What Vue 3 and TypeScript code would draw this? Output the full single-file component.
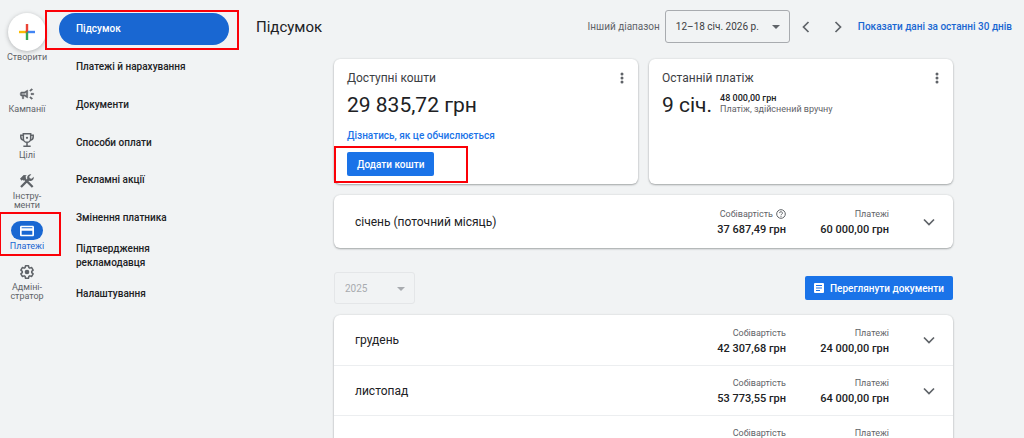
<script setup lang="ts">
import { ref } from 'vue'

interface RailItem {
  icon: 'campaign' | 'goals' | 'tools' | 'billing' | 'admin'
  lines: string[]
  active?: boolean
}

interface MonthRow {
  id: string
  name?: string
  cost?: string
  paid?: string
}

const rail: RailItem[] = [
  { icon: 'campaign', lines: ['Кампанії'] },
  { icon: 'goals', lines: ['Цілі'] },
  { icon: 'tools', lines: ['Інстру-', 'менти'] },
  { icon: 'billing', lines: ['Платежі'], active: true },
  { icon: 'admin', lines: ['Адміні-', 'стратор'] },
]

const sections: string[] = [
  'Підсумок',
  'Платежі й нарахування',
  'Документи',
  'Способи оплати',
  'Рекламні акції',
  'Змінення платника',
  'Підтвердження рекламодавця',
  'Налаштування',
]

const months: MonthRow[] = [
  { id: '2025-12', name: 'грудень', cost: '42 307,68 грн', paid: '24 000,00 грн' },
  { id: '2025-11', name: 'листопад', cost: '53 773,55 грн', paid: '64 000,00 грн' },
  { id: '2025-10' },
]

const activeSection = ref(0)
</script>

<template>
  <div class="app">
    <nav class="rail" aria-label="Головне меню">
      <button class="create" type="button">
        <span class="create-circle">
          <svg viewBox="0 0 18 18" width="18" height="18" aria-hidden="true">
            <path d="M7.800 1h2.400v7H7.800z" fill="#ea4335" />
            <path d="M1 7.800h7v2.400H1z" fill="#fbbc04" />
            <path d="M10 7.800h7v2.400h-7z" fill="#4285f4" />
            <path d="M7.800 8h2.400v9H7.800z" fill="#34a853" />
            <path d="M7.800 7.800h2.400l-2.400 2.400z" fill="#ea4335" />
          </svg>
        </span>
        <span>Створити</span>
      </button>
      <a
        v-for="item in rail"
        :key="item.icon"
        href="#"
        class="rail-item"
        :class="[item.icon, { active: item.active }]"
      >
        <span class="rail-icon">
          <svg viewBox="0 0 24 24" width="16" height="16" fill="currentColor" aria-hidden="true">
            <path v-if="item.icon === 'campaign'" stroke="currentColor" stroke-width=".8" d="M18 11v2h4v-2h-4zm-2 6.61c.96.71 2.21 1.65 3.2 2.39.4-.53.8-1.07 1.2-1.6-.99-.74-2.24-1.68-3.2-2.4-.4.54-.8 1.08-1.2 1.61zM20.4 5.6c-.4-.53-.8-1.07-1.2-1.6-.99.74-2.24 1.68-3.2 2.4.4.53.8 1.07 1.2 1.6.96-.72 2.21-1.65 3.2-2.4zM4 9c-1.1 0-2 .9-2 2v2c0 1.1.9 2 2 2h1v4h2v-4h1l5 3V6L8 9H4zm5.03 1.71L11 9.53v4.94l-1.97-1.18-.48-.29H4v-2h4.55l.48-.29z" />
            <g v-else-if="item.icon === 'goals'" fill="none" stroke="currentColor" stroke-width="2.300">
              <path d="M6.500 2.500h11V10a5.500 5.500 0 0 1-11 0z" />
              <path d="M6.500 5H2.700v2.500c0 2.700 1.800 4.500 4.500 4.800M17.500 5h3.800v2.500c0 2.700-1.800 4.500-4.500 4.800M12 15.500V21M6.500 21.500h11" />
              <circle cx="12" cy="8.800" r="1.700" fill="currentColor" stroke="none" />
            </g>
            <g v-else-if="item.icon === 'tools'">
              <path d="M1.500 8.500L7 3l4.500.5-2 2.500 1.500 1.500-4 4-1.500-1.500L4 11.500z" />
              <path d="M8 8.500l12.500 12.500M3 21L15.500 8.500" fill="none" stroke="currentColor" stroke-width="3.400" />
              <path d="M18.500 2.200a5 5 0 1 0 3.500 3.500l-3 3-3-.8-.6-2.700z" />
            </g>
            <path v-else-if="item.icon === 'billing'" fill-rule="evenodd" d="M3.500 4h17c1.100 0 2 .9 2 2v12c0 1.100-.9 2-2 2h-17c-1.100 0-2-.9-2-2V6c0-1.100.9-2 2-2zM4 6.200v1.800h16V6.200H4zm0 5.300v6.300h16v-6.300H4z" />
            <template v-else>
              <path d="M9.800 2.500h4.400l.6 2.800 1.500.9 2.700-.9 2.200 3.800-2.100 1.900v2l2.100 1.900-2.200 3.800-2.700-.9-1.500.9-.6 2.800H9.800l-.6-2.800-1.500-.9-2.700.9-2.200-3.800L4.900 13v-2L2.800 9.100 5 5.300l2.700.9 1.500-.9z" fill="none" stroke="currentColor" stroke-width="2.300" stroke-linejoin="round" />
              <circle cx="12" cy="12" r="3.500" />
            </template>
          </svg>
        </span>
        <span v-for="line in item.lines" :key="line" class="rail-line">{{ line }}</span>
      </a>
    </nav>

    <nav class="sections" aria-label="Платежі">
      <a
        v-for="(label, i) in sections"
        :key="label"
        href="#"
        class="section"
        :class="{ selected: i === activeSection }"
        @click.prevent="activeSection = i"
      ><span>{{ label }}</span></a>
    </nav>

    <main class="main">
      <header class="top">
        <h1>Підсумок</h1>
        <label class="range-label" for="range">Інший діапазон</label>
        <span class="select range">
          <select id="range">
            <option>12–18 січ. 2026 р.</option>
          </select>
          <svg viewBox="0 0 8 4" width="8" height="4" aria-hidden="true"><path d="M0 0h8L4 4z" fill="currentColor" /></svg>
        </span>
        <button class="step" type="button" aria-label="Назад">
          <svg viewBox="0 0 8 12" width="8" height="12" aria-hidden="true"><path d="M6.500 1L1.500 6l5 5" /></svg>
        </button>
        <button class="step" type="button" aria-label="Вперед">
          <svg viewBox="0 0 8 12" width="8" height="12" aria-hidden="true"><path d="M1.500 1l5 5-5 5" /></svg>
        </button>
        <a class="last-days" href="#">Показати дані за останні 30 днів</a>
      </header>

      <div class="content">
        <div class="cards">
          <section class="card">
            <div class="card-head">
              <h2>Доступні кошти</h2>
              <button class="more" type="button" aria-label="Більше">
                <svg viewBox="0 0 4 12" width="4" height="12" aria-hidden="true"><circle cx="2" cy="2" r="1.500" /><circle cx="2" cy="6" r="1.500" /><circle cx="2" cy="10" r="1.500" /></svg>
              </button>
            </div>
            <p class="big">29 835,72 грн</p>
            <a class="learn" href="#">Дізнатись, як це обчислюється</a>
            <div class="add-funds">
              <button class="primary" type="button">Додати кошти</button>
            </div>
          </section>
          <section class="card">
            <div class="card-head">
              <h2>Останній платіж</h2>
              <button class="more" type="button" aria-label="Більше">
                <svg viewBox="0 0 4 12" width="4" height="12" aria-hidden="true"><circle cx="2" cy="2" r="1.500" /><circle cx="2" cy="6" r="1.500" /><circle cx="2" cy="10" r="1.500" /></svg>
              </button>
            </div>
            <div class="payment">
              <p class="big">9 січ.</p>
              <div class="payment-info">
                <strong>48 000,00 грн</strong>
                <span>Платіж, здійснений вручну</span>
              </div>
            </div>
          </section>
        </div>

        <section class="panel current">
          <div class="month">
            <h3>січень (поточний місяць)</h3>
            <div class="amount cost">
              <span class="caption">Собівартість
                <svg viewBox="0 0 10 10" width="10" height="10" fill="none" stroke="currentColor" aria-hidden="true"><circle cx="5" cy="5" r="4.300" /><path d="M3.600 4.100a1.400 1.400 0 1 1 2.100 1.200c-.5.300-.7.500-.7 1M5 7v.9" /></svg>
              </span>
              <span class="value">37 687,49 грн</span>
            </div>
            <div class="amount">
              <span class="caption">Платежі</span>
              <span class="value">60 000,00 грн</span>
            </div>
            <button class="expand" type="button" aria-label="Розгорнути">
              <svg viewBox="0 0 12 8" width="12" height="8" aria-hidden="true"><path d="M1 1.500l5 5 5-5" /></svg>
            </button>
          </div>
        </section>

        <div class="year-bar">
          <span class="select year">
            <select aria-label="Рік" disabled>
              <option>2025</option>
            </select>
            <svg viewBox="0 0 8 4" width="8" height="4" aria-hidden="true"><path d="M0 0h8L4 4z" fill="currentColor" /></svg>
          </span>
          <button class="primary docs" type="button">
            <svg viewBox="0 0 10 10" width="10" height="10" aria-hidden="true">
              <rect width="10" height="10" rx="1" fill="#fff" />
              <path d="M2 2.500h6M2 5h6M2 7.500h4" stroke="#1a73e8" />
            </svg>
            Переглянути документи
          </button>
        </div>

        <section class="panel">
          <div v-for="row in months" :key="row.id" class="month">
            <h3>{{ row.name }}</h3>
            <div class="amount cost">
              <span class="caption">Собівартість</span>
              <span class="value">{{ row.cost }}</span>
            </div>
            <div class="amount">
              <span class="caption">Платежі</span>
              <span class="value">{{ row.paid }}</span>
            </div>
            <button class="expand" type="button" aria-label="Розгорнути">
              <svg viewBox="0 0 12 8" width="12" height="8" aria-hidden="true"><path d="M1 1.500l5 5 5-5" /></svg>
            </button>
          </div>
        </section>
      </div>
    </main>
  </div>
</template>

<style>
body {
  background: #f1f3f4;
}
</style>

<style scoped>
.app {
  display: flex;
  height: 100vh;
  overflow: hidden;
  font-family: Roboto, "Noto Sans", sans-serif;
  color: #202124;
  background: #f1f3f4;
}
.app *,
.app *::after {
  box-sizing: border-box;
}
h1, h2, h3, p {
  margin: 0;
  font-weight: 400;
}
a {
  text-decoration: none;
  color: inherit;
}
button {
  padding: 0;
  border: 0;
  background: none;
  font-family: inherit;
  color: inherit;
  cursor: pointer;
}

.rail {
  display: flex;
  flex-direction: column;
  align-items: center;
  flex: none;
  gap: 11px;
  width: 54px;
  padding-top: 13px;
  font-size: 9px;
  line-height: 9px;
  color: #5f6368;
}
.create {
  display: flex;
  flex-direction: column;
  align-items: center;
  gap: 2px;
  margin-bottom: 11px;
  font-size: 9px;
  line-height: 9px;
}
.create-circle {
  display: flex;
  align-items: center;
  justify-content: center;
  width: 38px;
  height: 38px;
  border-radius: 50%;
  background: #fff;
  box-shadow: 0 1px 4px rgba(60, 64, 67, 0.35);
}
.rail-item {
  position: relative;
  display: flex;
  flex-direction: column;
  align-items: center;
}
.rail-item.campaign {
  margin-bottom: 5px;
}
.rail-icon {
  display: flex;
  align-items: center;
  justify-content: center;
  width: 32px;
  height: 19px;
  margin-bottom: 2px;
  border-radius: 10px;
}
.rail-item.active {
  color: #1967d2;
}
.rail-item.active .rail-icon {
  color: #fff;
  background: #1967d2;
}
.rail-item.active::after {
  content: "";
  position: absolute;
  inset: -9px -17px -5px -11px;
  border: 2px solid #fb0007;
}

.sections {
  display: flex;
  flex-direction: column;
  justify-content: space-between;
  flex: none;
  width: 184px;
  height: 297px;
  margin-top: 13px;
  padding: 0 9px 0 5px;
  font-size: 10px;
  line-height: 14px;
  font-weight: 500;
}
.section {
  position: relative;
  display: flex;
  align-items: center;
  height: 32px;
  padding: 0 60px 0 17px;
  border-radius: 16px;
}
.section:not(:nth-child(7)) {
  padding-right: 0;
}
.section.selected {
  color: #fff;
  background: #1967d2;
}
.section.selected::after {
  content: "";
  position: absolute;
  inset: -3px -10px -5px -14px;
  border: 2px solid #fb0007;
}

.main {
  flex: 1;
  min-width: 0;
  padding: 10px 12px 0 18px;
}
.top {
  display: flex;
  align-items: center;
  height: 33px;
}
.top h1 {
  margin-right: auto;
  font-size: 15px;
  line-height: 20px;
}
.range-label {
  margin-right: 5px;
  font-size: 10px;
  color: #5f6368;
}
.select {
  position: relative;
  display: block;
}
.select select {
  width: 100%;
  height: 100%;
  padding: 0 10px;
  border: 1px solid #a8abaf;
  border-radius: 3px;
  background: transparent;
  appearance: none;
  font-family: inherit;
  font-size: 10px;
  color: #3c4043;
  opacity: 1;
}
.select svg {
  position: absolute;
  top: 15px;
  right: 10px;
  color: #5f6368;
  pointer-events: none;
}
.range {
  width: 125px;
  height: 33px;
}
.step {
  display: flex;
  align-items: center;
  justify-content: center;
  width: 32px;
  height: 32px;
}
.step svg,
.expand svg {
  fill: none;
  stroke: #5f6368;
  stroke-width: 1.7;
}
.last-days {
  margin-left: 4px;
  font-size: 10px;
  font-weight: 500;
  color: #1967d2;
}

.content {
  margin: 16px 59px 0 78px;
}
.cards {
  display: grid;
  grid-template-columns: 1fr 1fr;
  gap: 11px;
  margin-bottom: 11px;
}
.card,
.panel {
  border-radius: 6px;
  background: #fff;
  box-shadow: 0 1px 2px rgba(60, 64, 67, 0.4), 0 0 2px rgba(60, 64, 67, 0.15);
}
.card {
  padding: 10px 12px 8px 13px;
}
.card-head {
  display: flex;
  align-items: center;
  justify-content: space-between;
  height: 18px;
}
.card-head h2 {
  font-size: 12px;
  line-height: 18px;
  color: #3c4043;
}
.more {
  display: flex;
  padding: 3px 2px;
}
.more svg {
  fill: #5f6368;
}
.big {
  margin-top: 4px;
  font-size: 21px;
  line-height: 28px;
}
.learn {
  display: block;
  margin-top: 10px;
  font-size: 10px;
  line-height: 14px;
  font-weight: 500;
  color: #1a73e8;
}
.add-funds {
  position: relative;
  margin-top: 9px;
}
.add-funds::after {
  content: "";
  position: absolute;
  top: -6px;
  bottom: -7px;
  left: -13px;
  width: 134px;
  border: 2px solid #fb0007;
  pointer-events: none;
}
.primary {
  display: inline-flex;
  align-items: center;
  justify-content: center;
  height: 24px;
  padding: 0 10px;
  border-radius: 2px;
  background: #1a73e8;
  color: #fff;
  font-size: 10px;
  font-weight: 500;
}
.payment {
  display: flex;
  gap: 8px;
}
.payment-info {
  display: flex;
  flex-direction: column;
  margin-top: 6px;
  font-size: 9px;
  line-height: 11px;
  color: #5f6368;
}
.payment-info strong {
  font-weight: 500;
  color: #202124;
}

.month {
  display: flex;
  align-items: center;
  height: 50px;
  padding: 0 16px 0 21px;
}
.month + .month {
  border-top: 1px solid #eceef0;
}
.current .month {
  height: 53px;
}
.month h3 {
  flex: 1;
  font-size: 12px;
  line-height: 18px;
}
.amount {
  display: flex;
  flex-direction: column;
  align-items: flex-end;
  width: 103px;
  padding-top: 3px;
}
.caption {
  display: flex;
  align-items: center;
  gap: 3px;
  font-size: 9px;
  line-height: 14px;
  color: #5f6368;
}
.value {
  min-height: 18px;
  font-size: 11px;
  line-height: 18px;
  font-weight: 500;
}
.expand {
  display: flex;
  align-items: center;
  justify-content: center;
  width: 16px;
  height: 24px;
  margin-left: 32px;
}
.year-bar {
  display: flex;
  align-items: center;
  justify-content: space-between;
  margin: 24px 0 11px;
}
.year {
  width: 81px;
  height: 32px;
}
.year select {
  border-color: #e4e6e8;
  color: #a8abaf;
}
.year svg {
  color: #a8abaf;
}
.docs {
  gap: 6px;
  padding: 0 9px;
}
</style>
